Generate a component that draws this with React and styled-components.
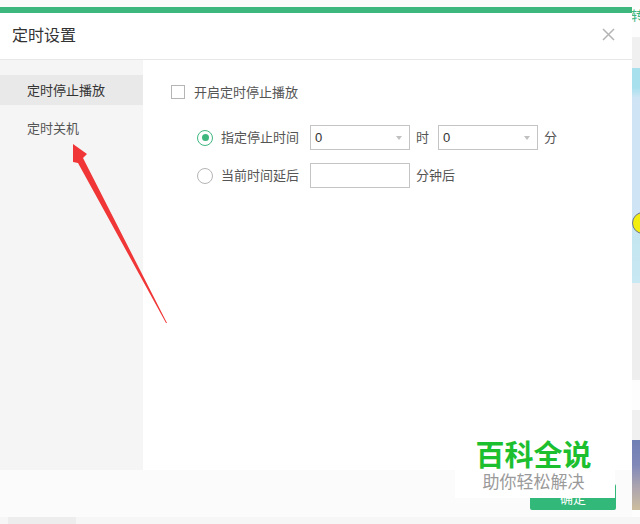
import React from 'react';
import styled, { createGlobalStyle } from 'styled-components';

const GlobalStyle = createGlobalStyle`
  html, body {
    margin: 0;
    padding: 0;
    background: #fff;
    font-family: "Liberation Sans", "Noto Sans CJK SC", sans-serif;
  }
`

const Page = styled.div`
  position: relative;
  width: 640px;
  height: 524px;
  overflow: hidden;
  background: #f6f6f6;
  display: flex;
  flex-direction: column;
`

const TopGap = styled.div`
  height: 7px;
  flex: none;
  background: #fafbfa;
`

const Main = styled.div`
  display: flex;
  height: 510px;
  flex: none;
`

const Dialog = styled.div`
  width: 632px;
  flex: none;
  display: flex;
  flex-direction: column;
  background: #fff;
  border-top: 6px solid #3eb77f;
`

const Header = styled.div`
  height: 41px;
  flex: none;
  display: flex;
  align-items: center;
  justify-content: space-between;
  padding: 0 17px 5px 12px;
  border-bottom: 1px solid #e8e8e8;
`

const Title = styled.div`
  font-size: 16px;
  color: #333;
`

const CloseIcon = styled.svg`
  width: 13px;
  height: 13px;
  display: block;
  margin-top: 1px;
`

const Body = styled.div`
  height: 410px;
  flex: none;
  display: flex;
`

const Sidebar = styled.div`
  width: 143px;
  flex: none;
  background: #f5f5f5;
  padding-top: 15px;
  box-sizing: border-box;
  display: flex;
  flex-direction: column;
  gap: 9px;
`

const MenuItem = styled.div`
  height: 30px;
  line-height: ${props => props.$active ? '32px' : '30px'};
  padding-left: 27px;
  font-size: 13px;
  color: ${props => props.$active ? '#333' : '#555'};
  background: ${props => props.$active ? '#e9e9e9' : 'transparent'};
`

const Content = styled.div`
  flex: 1;
  padding: 25px 0 0 28px;
  display: flex;
  flex-direction: column;
`

const CheckRow = styled.div`
  display: flex;
  align-items: center;
  gap: 9px;
  height: 14px;
  font-size: 13px;
  color: #555;
`

const CheckLabel = styled.span`
  margin-bottom: 2px;
`

const CheckBox = styled.span`
  width: 14px;
  height: 14px;
  box-sizing: border-box;
  border: 1px solid #b5b5b5;
  background: #fff;
`

const Options = styled.div`
  margin: 26px 0 0 26px;
  display: flex;
  flex-direction: column;
  gap: 13px;
`

const OptionRow = styled.div`
  display: flex;
  align-items: center;
  height: 25px;
  font-size: 13px;
  color: #555;
`

const Radio = styled.span`
  width: 16px;
  height: 16px;
  box-sizing: border-box;
  border-radius: 50%;
  border: 1px solid ${props => props.$checked ? '#3eb77f' : '#b5b5b5'};
  display: flex;
  align-items: center;
  justify-content: center;
  margin-right: 8px;
  &::after {
    content: '';
    width: 7px;
    height: 7px;
    border-radius: 50%;
    background: ${props => props.$checked ? '#3eb77f' : 'transparent'};
  }
`

const RowLabel = styled.span`
  width: 78px;
  margin: 0 11px 2px 0;
`

const Select = styled.div`
  width: 100px;
  height: 25px;
  box-sizing: border-box;
  border: 1px solid #c4c4c4;
  display: flex;
  align-items: center;
  justify-content: space-between;
  padding: 0 7px 0 4px;
  font-size: 13px;
  color: #333;
  &::after {
    content: '';
    border-left: 3.5px solid transparent;
    border-right: 3.5px solid transparent;
    border-top: 4px solid #c0c0c0;
  }
`

const Unit = styled.span`
  margin: 0 ${props => props.$after || 0}px 2px 6px;
`

const TextInput = styled.input`
  width: 100px;
  height: 25px;
  box-sizing: border-box;
  border: 1px solid #c4c4c4;
  padding: 0 4px;
  outline: none;
  background: #fff;
`

const Footer = styled.div`
  height: 47px;
  flex: none;
  box-sizing: border-box;
  background: #fbfbfb;
  padding: 14px 16px 0 0;
  display: flex;
  justify-content: flex-end;
  align-items: flex-start;
`

const OkButton = styled.button`
  width: 86px;
  height: 26px;
  border: none;
  border-radius: 2px;
  padding: 0;
  background: #32b878;
  color: #fff;
  font: inherit;
  font-size: 13px;
`

const Strip = styled.div`
  width: 8px;
  flex: none;
  display: flex;
  flex-direction: column;
  overflow: hidden;
  background: #fdfdfd;
`

const StripLabel = styled.div`
  height: 30px;
  flex: none;
  font-size: 13px;
  line-height: 18px;
  color: #3eb77f;
  margin-left: -1px;
  white-space: nowrap;
`

const StripBlock = styled.div`
  height: ${props => props.$h}px;
  flex: none;
  background: ${props => props.$bg};
`

const SkyBlock = styled.div`
  position: relative;
  height: 215px;
  flex: none;
  background: linear-gradient(#a9e0ee 0, #a9e0ee 20px, #cfe5f5 30px, #cfe5f5 150px, #c4e6f1 170px, #c8e9f3 100%);
  &::after {
    content: '';
    position: absolute;
    left: 0;
    top: 144px;
    width: 22px;
    height: 22px;
    box-sizing: border-box;
    border-radius: 50%;
    border: 1.5px solid #6a7396;
    background: #f4ee10;
  }
`

const PhotoBlock = styled.div`
  height: 70px;
  flex: none;
  background: linear-gradient(#6f7fb4 0, #8088b8 35%, #a9a3b0 65%, #cdbd9e 100%);
`

const BottomBar = styled.div`
  height: 7px;
  flex: none;
  padding-left: 8px;
  background: #f6f6f6;
  &::before {
    content: '';
    display: block;
    width: 68px;
    height: 7px;
    background: #ededed;
  }
`

const Arrow = styled.svg`
  position: absolute;
  left: 0;
  top: 0;
  width: 640px;
  height: 524px;
  pointer-events: none;
`

const Watermark = styled.div`
  position: absolute;
  left: 455px;
  top: 432px;
  width: 160px;
  height: 66px;
  background: #fff;
  display: flex;
  flex-direction: column;
  align-items: center;
  padding: 4px 3px 0 0;
  box-sizing: border-box;
`

const MarkName = styled.div`
  font-family: "Noto Sans CJK SC", sans-serif;
  font-size: 29px;
  font-weight: 700;
  line-height: 34px;
  color: #1cc02f;
`

const MarkSub = styled.div`
  font-family: "Noto Sans CJK SC", sans-serif;
  font-size: 17px;
  line-height: 22px;
  color: #9a9a9a;
`

function App() {
    return (
        <Page>
            <GlobalStyle />
            <TopGap />
            <Main>
                <Dialog>
                    <Header>
                        <Title>定时设置</Title>
                        <CloseIcon viewBox="0 0 13 13">
                            <path d="M1 1 L12 12 M12 1 L1 12" stroke="#b4b4b4" strokeWidth="1.5" fill="none" />
                        </CloseIcon>
                    </Header>
                    <Body>
                        <Sidebar>
                            <MenuItem $active>定时停止播放</MenuItem>
                            <MenuItem>定时关机</MenuItem>
                        </Sidebar>
                        <Content>
                            <CheckRow>
                                <CheckBox />
                                <CheckLabel>开启定时停止播放</CheckLabel>
                            </CheckRow>
                            <Options>
                                <OptionRow>
                                    <Radio $checked />
                                    <RowLabel>指定停止时间</RowLabel>
                                    <Select>0</Select>
                                    <Unit $after={9}>时</Unit>
                                    <Select>0</Select>
                                    <Unit>分</Unit>
                                </OptionRow>
                                <OptionRow>
                                    <Radio />
                                    <RowLabel>当前时间延后</RowLabel>
                                    <TextInput />
                                    <Unit>分钟后</Unit>
                                </OptionRow>
                            </Options>
                        </Content>
                    </Body>
                    <Footer>
                        <OkButton>确定</OkButton>
                    </Footer>
                </Dialog>
                <Strip>
                    <StripLabel>转</StripLabel>
                    <StripBlock $h={31} $bg="#f0f0f0" />
                    <SkyBlock />
                    <StripBlock $h={97} $bg="#eeeeee" />
                    <StripBlock $h={30} $bg="#fdfdfd" />
                    <StripBlock $h={30} $bg="#f0f0f0" />
                    <PhotoBlock />
                </Strip>
            </Main>
            <BottomBar />
            <Arrow viewBox="0 0 640 524">
                <polygon points="73,144 87,154 83,158 167,323 166,323 78,163 73,162" fill="#f03636" />
            </Arrow>
            <Watermark>
                <MarkName>百科全说</MarkName>
                <MarkSub>助你轻松解决</MarkSub>
            </Watermark>
        </Page>
    );
}

export default App;
